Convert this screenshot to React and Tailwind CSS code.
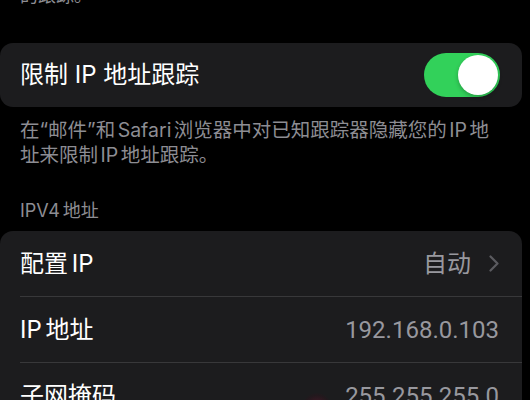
import React from 'react';

const font = { fontFamily: '"Inter", "Noto Sans CJK SC", sans-serif' };

function Toggle() {
  return (
    <div className="flex h-[44px] w-[76px] items-center justify-end rounded-full bg-[#32d15a] p-[2px]">
      <div className="h-[40px] w-[40px] rounded-full bg-white shadow-[0_2px_4px_rgba(0,0,0,0.25)]" />
    </div>
  );
}

function Chevron() {
  return (
    <svg width="10" height="17" viewBox="0 0 10 17" fill="none">
      <path d="M1.5 1.5 L8.5 8.5 L1.5 15.5" stroke="#5b5b60" strokeWidth="2.2" strokeLinecap="round" strokeLinejoin="round" />
    </svg>
  );
}

function Row({ label, value, chevron, last }) {
  return (
    <div className="flex h-[66px] flex-col">
      <div className="flex flex-1 items-center justify-between pl-[20px] pr-[23px]">
        <span className="text-[24px] text-white [word-spacing:-3px]">{label}</span>
        <div className="flex items-center gap-[18px]">
          <span className="text-[24px] text-[#98989e]" style={{ fontFamily: '"Roboto", "Noto Sans CJK SC", sans-serif' }}>{value}</span>
          {chevron && <Chevron />}
        </div>
      </div>
      {!last && <div className="ml-[20px] h-px bg-[#38383a]" />}
    </div>
  );
}

export default function App() {
  return (
    <div className="relative h-[400px] w-[530px] overflow-hidden bg-black" style={font}>
      <div className="mt-[-16px] px-[20px] text-[18px] leading-[23px] text-[#8d8d93]">的跟踪。</div>

      <div className="mr-[8px] mt-[36px] flex h-[64px] items-center justify-between rounded-[13px] bg-[#1c1c1e] pl-[20px] pr-[22px]">
        <span className="text-[24px] text-white">限制 IP 地址跟踪</span>
        <Toggle />
      </div>

      <p className="mt-[11px] pl-[20px] pr-[30px] text-[19.5px] leading-[25px] text-[#8d8d93] [word-spacing:-3px]">
        在“邮件”和 Safari 浏览器中对已知跟踪器隐藏您的 IP 地址来限制 IP 地址跟踪。
      </p>

      <div className="mt-[31px] px-[20px] text-[18px] leading-[23px] text-[#8d8d93] [word-spacing:-2px]">IPV4 地址</div>

      <div className="mr-[8px] mt-[9px] rounded-[13px] bg-[#1c1c1e]">
        <Row label="配置 IP" value="自动" chevron />
        <Row label="IP 地址" value="192.168.0.103" />
        <Row label="子网掩码" value="255.255.255.0" last />
      </div>

      <div className="absolute left-[302px] top-[393px] h-[30px] w-[30px] rounded-full bg-[radial-gradient(circle,rgba(120,20,50,0.55),rgba(60,10,25,0.2)_60%,transparent_75%)]" />
    </div>
  );
}
